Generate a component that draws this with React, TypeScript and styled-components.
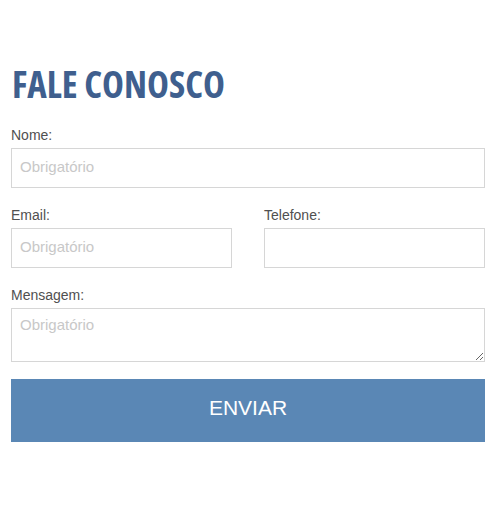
import styled, { createGlobalStyle } from 'styled-components';

const GlobalStyle = createGlobalStyle`
  body {
    margin: 0;
    background: #fff;
    font-family: "Liberation Sans", Arial, sans-serif;
  }
`;

const Form = styled.form`
  width: 474px;
  margin: 0 0 0 11px;
  padding-top: 64px;
  display: flex;
  flex-direction: column;
`;

const Title = styled.h1`
  margin: 0 0 21px 1px;
  font-family: "Open Sans", sans-serif;
  font-stretch: 75%;
  font-weight: 700;
  font-size: 37px;
  line-height: 40px;
  color: #3f5f8e;
`;

const Row = styled.div`
  display: grid;
  grid-template-columns: 1fr 1fr;
  column-gap: 32px;
`;

const Field = styled.div`
  display: flex;
  flex-direction: column;
  margin-bottom: 17px;
`;

const Label = styled.label`
  font-size: 14px;
  line-height: 20px;
  color: #505050;
  margin-bottom: 3px;
`;

const Input = styled.input`
  box-sizing: border-box;
  width: 100%;
  height: 40px;
  margin: 0;
  padding: 0 8px 3px;
  border: 1px solid #d6d6d6;
  border-radius: 0;
  font-family: "Liberation Sans", Arial, sans-serif;
  font-size: 15px;
  color: #555;
  outline: none;

  &::placeholder {
    color: #c8c8c8;
  }
`;

const TextArea = styled.textarea`
  box-sizing: border-box;
  width: 100%;
  height: 54px;
  margin: 0;
  padding: 7px 8px;
  border: 1px solid #d6d6d6;
  border-radius: 0;
  font-family: "Liberation Sans", Arial, sans-serif;
  font-size: 15px;
  color: #555;
  outline: none;
  display: block;

  &::placeholder {
    color: #c8c8c8;
  }
`;

const Submit = styled.button`
  height: 63px;
  border: none;
  border-radius: 0;
  background: #5a87b5;
  color: #fff;
  font-family: "Liberation Sans", Arial, sans-serif;
  font-size: 21px;
  line-height: 1;
  padding: 0 0 6px;
  text-transform: uppercase;
  cursor: pointer;
`;

export default function App() {
  return (
    <>
      <GlobalStyle />
      <Form onSubmit={(e) => e.preventDefault()}>
        <Title>FALE CONOSCO</Title>
        <Field>
          <Label htmlFor="nome">Nome:</Label>
          <Input id="nome" placeholder="Obrigatório" />
        </Field>
        <Row>
          <Field>
            <Label htmlFor="email">Email:</Label>
            <Input id="email" placeholder="Obrigatório" />
          </Field>
          <Field>
            <Label htmlFor="telefone">Telefone:</Label>
            <Input id="telefone" />
          </Field>
        </Row>
        <Field>
          <Label htmlFor="mensagem">Mensagem:</Label>
          <TextArea id="mensagem" placeholder="Obrigatório" />
        </Field>
        <Submit type="submit">Enviar</Submit>
      </Form>
    </>
  );
}
